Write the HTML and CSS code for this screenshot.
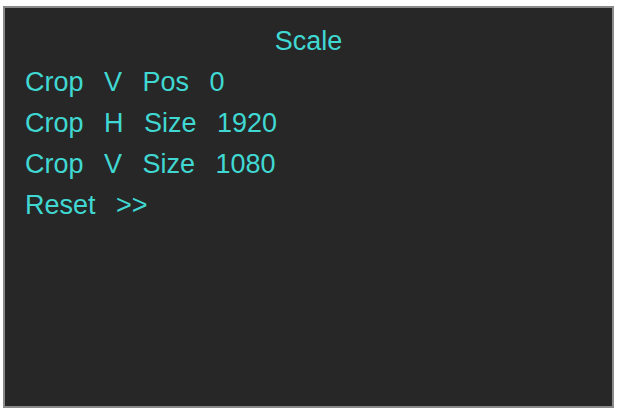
FILE: index.html
```html
<!DOCTYPE html>
<html>
<head>
<meta charset="utf-8">
<link rel="stylesheet" href="styles.css">
</head>
<body>
<div class="screen">
  <div class="title">Scale</div>
  <div class="row">Crop V Pos 0</div>
  <div class="row">Crop H Size 1920</div>
  <div class="row">Crop V Size 1080</div>
  <div class="row">Reset &gt;&gt;</div>
</div>
</body>
</html>
```
FILE: styles.css
```css
html, body {
  margin: 0;
  padding: 0;
  background: #ffffff;
}
body {
  width: 617px;
  height: 410px;
  overflow: hidden;
}
.screen {
  box-sizing: border-box;
  margin: 6px 3px 0 3px;
  height: 402px;
  background: #272727;
  border: 2px solid #8a8a8a;
  padding: 13px 20px 0 20px;
  font-family: "Liberation Sans", Arial, sans-serif;
  font-size: 27px;
  line-height: 41px;
  color: #40d8d2;
  word-spacing: 13px;
}
.title {
  text-align: center;
}
.row {
  white-space: nowrap;
}
```
